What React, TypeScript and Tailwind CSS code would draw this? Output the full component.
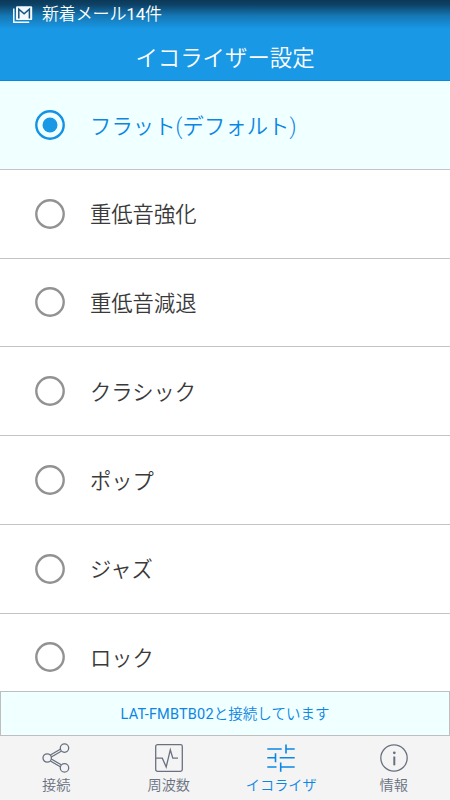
import React, { useState } from 'react';

const presets = [
  'フラット(デフォルト)',
  '重低音強化',
  '重低音減退',
  'クラシック',
  'ポップ',
  'ジャズ',
  'ロック',
];

const MailIcon: React.FC = () => (
  <svg className="w-5 h-[18px] shrink-0" viewBox="0 0 20 18" fill="none">
    <path d="M0.8 2.6V16.2H16.2" stroke="#fff" strokeWidth="1.4" />
    <rect x="3" y="0.3" width="16.2" height="13.8" rx="1.2" fill="#f2f8fc" />
    <path d="M5.8 12.4V3.2L11.1 7.8L16.4 3.2V12.4" stroke="#185580" strokeWidth="1.5" />
  </svg>
);

const ShareIcon: React.FC = () => (
  <svg className="w-7 h-[30px]" viewBox="0 0 28 30" fill="none" stroke="currentColor" strokeWidth="1.3">
    <circle cx="5.2" cy="15" r="4.2" />
    <circle cx="22.5" cy="5.1" r="4.2" />
    <circle cx="22.5" cy="24.9" r="4.2" />
    <path d="M8.4 12L18.3 6.2M9.3 14L19.2 8.2M8.4 18L18.3 23.8M9.3 16L19.2 21.8" />
  </svg>
);

const FrequencyIcon: React.FC = () => (
  <svg className="w-7 h-[30px]" viewBox="0 0 28 30" fill="none" stroke="currentColor" strokeWidth="1.3">
    <rect x="0.7" y="1.7" width="26.6" height="26.6" rx="1.8" />
    <path d="M1 15.2H7.3L11.2 24L15.3 6.8L17.8 15.2H23" />
  </svg>
);

const EqualizerIcon: React.FC = () => (
  <svg className="w-7 h-[30px]" viewBox="0 0 28 30" fill="none" stroke="currentColor" strokeWidth="1.6">
    <path d="M0.3 6H14.7M19 6H27.7M0.3 14.8H8.5M12.7 14.8H27.7M0.3 24H9.5M13.7 24H27.7" />
    <path d="M19 1.4V10.4M8.5 10.2V19.2M13.7 19.6V28.7" />
  </svg>
);

const InfoIcon: React.FC = () => (
  <svg className="w-7 h-[30px]" viewBox="0 0 28 30" fill="none" stroke="currentColor">
    <circle cx="14" cy="15" r="13.2" strokeWidth="1.3" />
    <path d="M14.3 13.5V22.3" strokeWidth="2" />
    <circle cx="14.3" cy="9.8" r="1.4" fill="currentColor" stroke="none" />
  </svg>
);

const tabs = [
  { label: '接続', icon: ShareIcon },
  { label: '周波数', icon: FrequencyIcon },
  { label: 'イコライザ', icon: EqualizerIcon },
  { label: '情報', icon: InfoIcon },
];

export default function App() {
  const [selected, setSelected] = useState(0);
  const [activeTab, setActiveTab] = useState(2);

  return (
    <div className="w-[450px] h-[800px] flex flex-col overflow-hidden bg-white font-[350] font-[Roboto,'Noto_Sans_CJK_JP',sans-serif]">
      {/* Status bar and title */}
      <header className="h-[81px] shrink-0 flex flex-col border-b border-[#0788df] bg-[#1998e6] bg-[linear-gradient(to_bottom,#0b3856_0px,#0d4368_5px,#1578b5_16px,#1998e6_29px)] text-white">
        <div className="h-[29px] flex items-center gap-[9px] pl-[13px] text-[17px] leading-none">
          <MailIcon />
          <span className="tracking-[-0.15px]">
            新着メール<span className="font-normal">14</span>件
          </span>
        </div>
        <h1 className="flex-1 flex items-center justify-center text-[22.4px] leading-none pt-2">イコライザー設定</h1>
      </header>

      {/* Preset list */}
      <main className="flex-1 min-h-0 overflow-hidden">
        {presets.map((name, idx) => {
          const checked = idx === selected;
          return (
            <button
              key={name}
              onClick={() => setSelected(idx)}
              className={`w-full h-[88.75px] flex items-center pl-[35px] gap-[25px] border-b border-[#c4c4c4] text-left text-[21.3px] leading-none ${
                checked ? 'bg-[#f0ffff] text-[#0b86e3] tracking-[0.1px]' : 'bg-white text-[#3a3a3a]'
              }`}
            >
              <svg
                className={`size-[30px] shrink-0 ${checked ? 'text-[#1492e4]' : 'text-[#929292]'}`}
                viewBox="0 0 30 30"
                fill="none"
              >
                <circle cx="15" cy="15" r="13.7" stroke="currentColor" strokeWidth="2.4" />
                {checked && <circle cx="15" cy="15" r="7.5" fill="#1998e6" />}
              </svg>
              <span className="pt-[3px]">{name}</span>
            </button>
          );
        })}
      </main>

      {/* Connection status */}
      <div className="h-[45px] shrink-0 flex items-center justify-center border border-[#bebebe] bg-[#f0ffff] pt-1 text-[14.5px] leading-none text-[#0b86e3]">
        <span className="font-normal tracking-[0.2px]">LAT-FMBTB02</span>
        <span>と接続しています</span>
      </div>

      <nav className="h-16 shrink-0 grid grid-cols-4 bg-[#f4f4f4]">
        {tabs.map(({ label, icon: Icon }, idx) => (
          <button
            key={label}
            onClick={() => setActiveTab(idx)}
            className={`flex flex-col items-center pt-[7px] gap-[5px] text-[14.2px] leading-[14px] ${
              idx === activeTab ? 'text-[#0b86e3]' : 'text-[#697180]'
            }`}
          >
            <Icon />
            <span className="whitespace-nowrap">{label}</span>
          </button>
        ))}
      </nav>
    </div>
  );
}
